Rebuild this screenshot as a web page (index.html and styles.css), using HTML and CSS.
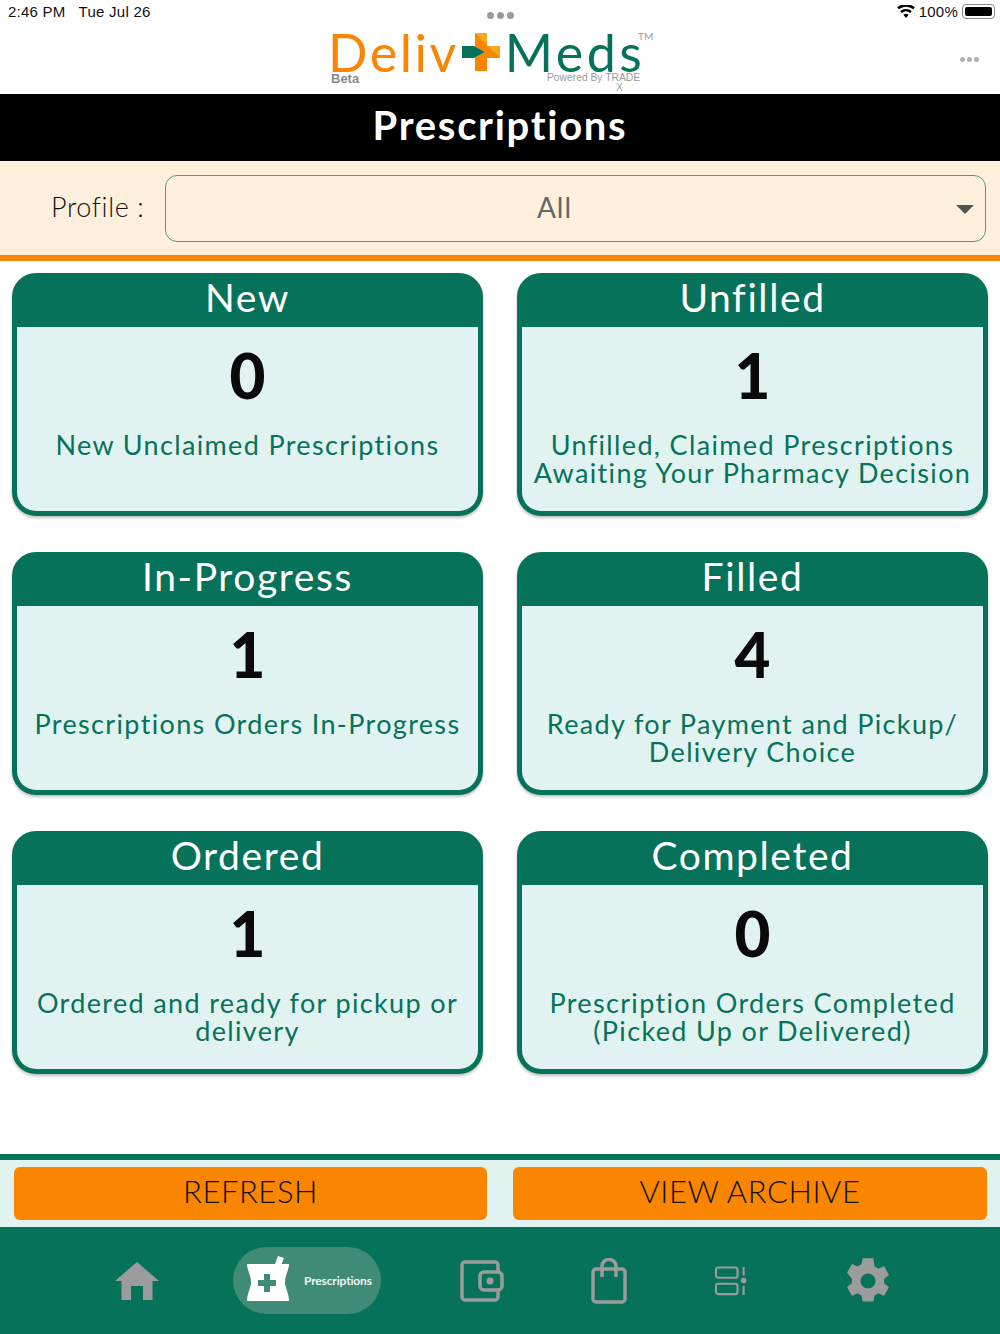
FILE: index.html
```html
<!DOCTYPE html>
<html lang="en">
<head>
<meta charset="utf-8">
<title>Prescriptions</title>
<link rel="stylesheet" href="styles.css">
</head>
<body>
<div class="app">
  <header class="top">
    <div class="status">
      <span class="status-time">2:46 PM &nbsp; Tue Jul 26</span>
      <span class="status-dots"><i></i><i></i><i></i></span>
      <span class="status-right">
        <svg class="wifi" width="18" height="13" viewBox="0 0 18 13"><path d="M9 13l-2.600-3.200a4 4 0 0 1 5.200 0zM4.900 8.100L3.200 6a9 9 0 0 1 11.600 0l-1.700 2.100a6.300 6.300 0 0 0-8.200 0zM1.800 4.300L.2 2.300a13.800 13.800 0 0 1 17.600 0l-1.600 2a11.300 11.300 0 0 0-14.400 0z" fill="#000"/></svg>
        <span>100%</span>
        <span class="battery"><span class="battery-fill"></span></span>
      </span>
    </div>
    <div class="brand-row">
      <div class="logo">
        <span class="logo-deliv">Deliv</span>
        <svg class="logo-plus" width="40" height="38" viewBox="0 0 40 38">
          <path d="M14 0h12v13h13v12H26v13H14V25h-1l11-6-11-6h1z" fill="#f98500"/>
          <path d="M14 0h12v13h13v12z" fill="#f7a823"/>
          <path d="M1 13h12l11 6-11 6H1z" fill="#07725a"/>
        </svg>
        <span class="logo-meds">Meds</span>
        <span class="logo-tm">TM</span>
        <span class="logo-beta">Beta</span>
        <span class="logo-power">Powered By TRADE</span>
        <span class="logo-x">X</span>
      </div>
      <span class="more"><i></i><i></i><i></i></span>
    </div>
  </header>
  <h1 class="title">Prescriptions</h1>
  <div class="profile">
    <label class="profile-label">Profile :</label>
    <div class="select">
      <span class="select-value">All</span>
      <span class="caret"></span>
    </div>
  </div>
  <main class="cards">
    <section class="card"><h2 class="card-head">New</h2><div class="card-body"><div class="count">0</div><p class="desc">New Unclaimed Prescriptions</p></div></section>
    <section class="card"><h2 class="card-head">Unfilled</h2><div class="card-body"><div class="count">1</div><p class="desc">Unfilled, Claimed Prescriptions Awaiting Your Pharmacy Decision</p></div></section>
    <section class="card"><h2 class="card-head">In-Progress</h2><div class="card-body"><div class="count">1</div><p class="desc">Prescriptions Orders In-Progress</p></div></section>
    <section class="card"><h2 class="card-head">Filled</h2><div class="card-body"><div class="count">4</div><p class="desc">Ready for Payment and Pickup/<br>Delivery Choice</p></div></section>
    <section class="card"><h2 class="card-head">Ordered</h2><div class="card-body"><div class="count">1</div><p class="desc">Ordered and ready for pickup or delivery</p></div></section>
    <section class="card"><h2 class="card-head">Completed</h2><div class="card-body"><div class="count">0</div><p class="desc">Prescription Orders Completed (Picked Up or Delivered)</p></div></section>
  </main>
  <div class="actions">
    <button class="action">REFRESH</button>
    <button class="action">VIEW ARCHIVE</button>
  </div>
  <nav class="tabs">
    <svg class="tab tab-home" width="44" height="38" viewBox="0 0 44 38"><path d="M22 0l22 19h-6.500v19H28V24H16v14H6.500V19H0z" fill="#9c9c9c"/></svg>
    <div class="tab-active">
      <svg width="42" height="45" viewBox="0 0 42 45"><path d="M31 0l6 2-2.500 6H42c0 6-4 11-4 18 0 6 4 11 4 19H0c0-8 4-13 4-19C4 19 0 14 0 8h28zM17 18v6h-6v6h6v6h6v-6h6v-6h-6v-6z" fill="#fff" fill-rule="evenodd"/></svg>
      <span class="tab-label">Prescriptions</span>
    </div>
    <svg class="tab tab-wallet" width="44" height="42" viewBox="0 0 44 42" fill="none" stroke="#9c9c9c" stroke-width="3.500"><path d="M38 12V5a3 3 0 0 0-3-3H5a3 3 0 0 0-3 3v32a3 3 0 0 0 3 3h30a3 3 0 0 0 3-3v-7"/><rect x="20" y="12" width="22" height="18" rx="4"/><circle cx="30" cy="21" r="3.500" fill="#9c9c9c" stroke="none"/></svg>
    <svg class="tab tab-bag" width="36" height="46" viewBox="0 0 36 46" fill="none" stroke="#9c9c9c" stroke-width="3.500"><rect x="2" y="11" width="32" height="33" rx="3"/><path d="M11 19V8a7 6.500 0 0 1 14 0v11"/></svg>
    <svg class="tab tab-panel" width="33" height="30" viewBox="0 0 34 32" fill="none" stroke="#9c9c9c" stroke-width="2.200"><rect x="1.500" y="1.500" width="23" height="11" rx="2.500"/><rect x="1.500" y="19" width="23" height="11" rx="2.500"/><path d="M31 1v9M31 21v10"/><circle cx="31" cy="15.500" r="3" fill="#9c9c9c" stroke="none"/></svg>
    <svg class="tab tab-gear" width="52" height="52" viewBox="0 0 24 24"><path fill="#9c9c9c" d="M19.400 13a7.500 7.500 0 0 0 0-2l2.300-1.800-2.300-4-2.700 1.100a7.500 7.500 0 0 0-1.700-1L14.500 1.500h-5L9 4.300a7.500 7.500 0 0 0-1.700 1L4.600 4.200l-2.300 4L4.600 11a7.500 7.500 0 0 0 0 2l-2.300 1.800 2.300 4 2.700-1.100a7.500 7.500 0 0 0 1.700 1l.5 2.800h5l.5-2.800a7.500 7.500 0 0 0 1.700-1l2.700 1.100 2.300-4zM12 15.500a3.500 3.500 0 1 1 0-7 3.500 3.500 0 0 1 0 7z"/></svg>
  </nav>
</div>
</body>
</html>
```
FILE: styles.css
```css
* { box-sizing: border-box; }
html, body { margin: 0; padding: 0; }
body { font-family: "Lato", "Liberation Sans", sans-serif; background: #fff; color: #000; }
.app { width: 1000px; height: 1334px; display: flex; flex-direction: column; overflow: hidden; }

.top { height: 94px; display: flex; flex-direction: column; background: #fff; }
.status { height: 25px; display: flex; align-items: center; justify-content: space-between; padding: 0 5px 2px 8px; position: relative; font: 15px "Liberation Sans", sans-serif; letter-spacing: .25px; color: #111; }
.status-dots { position: absolute; left: 487px; top: 12px; display: flex; gap: 3px; }
.status-dots i { width: 7px; height: 7px; border-radius: 50%; background: #9a9a9a; }
.status-right { display: flex; align-items: center; gap: 4px; }
.battery { width: 33px; height: 15px; border: 1px solid #888; border-radius: 4px; padding: 2px; display: flex; }
.battery-fill { flex: 1; background: #000; border-radius: 2px; }

.brand-row { flex: 1; display: flex; justify-content: center; position: relative; }
.logo { position: relative; width: 325px; height: 69px; margin-left: -19px; display: flex; align-items: flex-start; }
.logo-deliv, .logo-meds { font: 400 52px/38px "Lato", sans-serif; letter-spacing: 2.500px; padding-top: 8px; }
.logo-deliv { color: #f98500; }
.logo-meds { color: #07725a; letter-spacing: 3.500px; }
.logo-plus { margin: 8px 4px 0 2px; flex: none; }
.logo-tm { position: absolute; left: 310px; top: 7px; font-size: 10px; line-height: 8px; color: #999; }
.logo-beta { position: absolute; left: 3px; top: 46px; font: 700 13px/15px "Liberation Sans", sans-serif; color: #8a8a8a; }
.logo-power { position: absolute; left: 219px; top: 48px; font: 10.300px/10px "Liberation Sans", sans-serif; color: #9a9a9a; white-space: nowrap; }
.logo-x { position: absolute; left: 288px; top: 58px; font: 10.300px/9px "Liberation Sans", sans-serif; color: #9a9a9a; }
.more { position: absolute; left: 960px; top: 32px; display: flex; gap: 2px; }
.more i { width: 5px; height: 5px; border-radius: 50%; background: #b0b0b0; }

.title { margin: 0; height: 67px; background: #000; color: #fff; font: 700 40px/63px "Lato", sans-serif; letter-spacing: 1.700px; text-align: center; }

.profile { height: 100px; background: #fff0dd; border-bottom: 6px solid #f98500; display: flex; align-items: flex-start; padding: 14px 14px 0 51px; }
.profile-label { width: 114px; font: 300 27px/64px "Lato", sans-serif; letter-spacing: .6px; color: #111; white-space: nowrap; }
.select { flex: 1; height: 67px; border: 1.500px solid #4f9a84; border-radius: 12px; display: flex; align-items: center; justify-content: center; position: relative; padding: 0 42px 4px 0; }
.select-value { font-size: 28px; letter-spacing: 1px; color: #666; }
.caret { position: absolute; right: 11px; top: 29px; border: 9px solid transparent; border-top: 9px solid #555; border-bottom: 0; }

.cards { flex: 1; display: grid; grid-template-columns: 471px 471px; grid-auto-rows: 243px; column-gap: 34px; row-gap: 36px; padding: 12px 12px 0; }
.card { background: #07725a; border: 5px solid #07725a; border-radius: 24px; box-shadow: 0 2px 3px rgba(0,0,0,.25); display: flex; flex-direction: column; }
.card-head { margin: 0; height: 49px; flex: none; color: #fff; font: 400 39px/39px "Lato", sans-serif; letter-spacing: 1.600px; text-align: center; }
.card-body { flex: 1; display: flex; flex-direction: column; align-items: center; padding: 0 8px; background: #e0f3f0; border-radius: 0 0 19px 19px; }
.count { font: 900 62px/96px "Lato", sans-serif; height: 104px; color: #0a0a0a; }
.desc { margin: 0; font: 400 27px/28px "Lato", sans-serif; letter-spacing: 1.350px; color: #07725a; text-align: center; }

.actions { height: 73px; flex: none; border-top: 6px solid #07725a; background: #e0f3f0; display: grid; grid-template-columns: 473px 474px; column-gap: 26px; padding: 7px 13px 7px 14px; }
.action { border: 0; border-radius: 6px; background: #f98500; color: #111; font: 300 31px/1 "Lato", sans-serif; letter-spacing: .55px; padding: 0 0 4px; }

.tabs { height: 107px; flex: none; background: #07725a; display: flex; align-items: center; padding-left: 115px; }
.tab { flex: none; display: block; }
.tab-active { flex: none; width: 148px; height: 67px; margin-left: 74px; border-radius: 34px; background: #3f8b76; display: flex; align-items: center; padding-left: 14px; gap: 15px; }
.tab-active svg { margin-top: -4px; }
.tab-label { font-size: 12px; font-weight: 700; letter-spacing: -.15px; color: #f1f6f4; white-space: nowrap; }
.tab-wallet { margin-left: 79px; }
.tab-bag { margin-left: 87px; }
.tab-panel { margin-left: 87px; }
.tab-gear { margin-left: 95px; }
```
